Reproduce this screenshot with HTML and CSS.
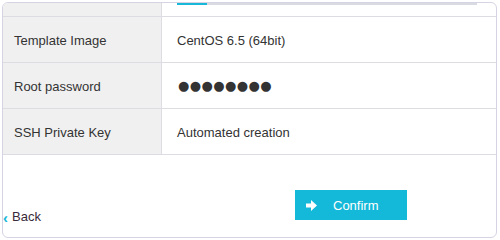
FILE: index.html
```html
<!DOCTYPE html>
<html lang="en">
<head>
  <meta charset="UTF-8">
  <title>Confirm server</title>
  <link rel="stylesheet" href="styles.css">
</head>
<body>
  <div class="card">
    <div class="row row-top">
      <div class="label"></div>
      <div class="value">
        <div class="progress"><div class="progress-fill"></div></div>
      </div>
    </div>
    <div class="row">
      <div class="label">Template Image</div>
      <div class="value">CentOS 6.5 (64bit)</div>
    </div>
    <div class="row">
      <div class="label">Root password</div>
      <div class="value dots">●●●●●●●●</div>
    </div>
    <div class="row">
      <div class="label">SSH Private Key</div>
      <div class="value">Automated creation</div>
    </div>
    <div class="footer">
      <a class="back" href="#"><span class="chev">‹</span>Back</a>
      <button class="confirm">
        <svg width="11" height="11" viewBox="0 0 11 11"><polygon points="0,3.5 5,3.5 5,0 11,5.5 5,11 5,7.5 0,7.5" fill="#fff"/></svg>
        <span>Confirm</span>
      </button>
    </div>
  </div>
</body>
</html>
```

FILE: styles.css
```css
body { margin: 0; background: #fff; font-family: "Liberation Sans", Arial, sans-serif; font-size: 13px; color: #333; }
.card { margin: 2px 3px 2px 2px; height: 234px; border: 1px solid #d6d4e4; border-radius: 6px; overflow: hidden; display: flex; flex-direction: column; }
.row { display: flex; height: 45px; border-bottom: 1px solid #dcdce2; }
.row-top { height: 13px; }
.label { width: 147px; padding: 2px 0 0 11px; background: #f0f0f0; border-right: 1px solid #dcdce2; display: flex; align-items: center; }
.value { flex: 1; padding: 2px 0 0 15px; display: flex; align-items: center; }
.row-top .label, .row-top .value { padding-top: 0; }
.row-top .value { align-items: flex-start; padding-right: 19px; }
.progress { flex: 1; height: 2px; background: #d8dce2; }
.progress-fill { width: 30px; height: 2px; background: #17b8d8; }
.dots { font-family: "DejaVu Sans", sans-serif; font-size: 13px; letter-spacing: 0.4px; padding-left: 16px; padding-top: 0; }
.footer { flex: 1; display: flex; align-items: flex-start; padding-top: 35px; }
.back { align-self: flex-end; margin-bottom: 11px; color: #3a2a3a; text-decoration: none; display: flex; align-items: center; }
.chev { color: #17b8d8; font-weight: bold; font-size: 15px; margin: 2px 4px 0 0; }
.confirm { margin-left: auto; margin-right: 89px; width: 112px; height: 30px; border: none; background: #14b8d8; color: #fff; font-family: inherit; font-size: 13px; display: flex; align-items: center; padding: 0 0 0 11px; cursor: pointer; }
.confirm span { margin-left: 16px; }
```
